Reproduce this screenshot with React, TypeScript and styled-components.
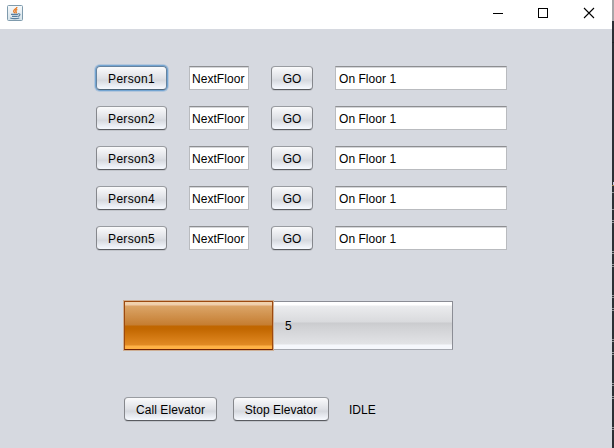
import React from "react";
import styled, { createGlobalStyle, css } from "styled-components";

const GlobalStyle = createGlobalStyle`
  * { box-sizing: border-box; }
  html, body { margin: 0; overflow: hidden; }
  body { font: 12px/15px "Liberation Sans", Arial, sans-serif; color: #000; }
`;

const Desktop = styled.div`
  display: grid;
  grid-template-columns: 612px 2px;
  width: 614px;
  height: 448px;
`;

const Frame = styled.main`
  display: flex;
  flex-direction: column;
  background: #d6d9e0;
`;

const TitleBar = styled.header`
  display: flex;
  justify-content: space-between;
  height: 29px;
  padding: 5px 17px 0 7px;
  background: #fff;
`;

const WindowControls = styled.div`
  display: flex;
  gap: 34px;
  padding-top: 2px;
`;

const Icon = styled.svg`
  display: block;
  flex: none;
`;

const Content = styled.section`
  display: flex;
  flex-direction: column;
  padding-top: 37px;
`;

const PersonList = styled.div`
  display: grid;
  gap: 16px;
  padding-left: 96px;
`;

const PersonRow = styled.div`
  display: grid;
  grid-template-columns: 71px 60px 42px 172px;
  column-gap: 22px;
  height: 24px;
`;

const Button = styled.button<{ $width: number; $focused?: boolean; $tracking?: number }>`
  width: ${({ $width }) => $width}px;
  height: 24px;
  padding: 2px 0 0;
  border: 1px solid #85878c;
  border-top-color: #999ca1;
  border-bottom-color: #595b60;
  border-radius: 4px;
  background: linear-gradient(#fbfbfc 0%, #f0f1f4 18%, #dfe1e6 50%, #d6d9df 60%, #e8ebf1 82%, #f7faff 100%);
  box-shadow: 0 1px 0 #c1c4ca;
  color: inherit;
  font: inherit;
  letter-spacing: ${({ $tracking = 0 }) => $tracking}px;
  white-space: nowrap;
  outline: none;
  ${({ $focused }) =>
    $focused &&
    css`
      border-color: #66839f;
      border-bottom-color: #4d6478;
      box-shadow: 0 0 0 1px #73a4d1, 0 0 0 2px #b4c7dc;
    `}
`;

const Field = styled.input<{ $width: number; $inset: number }>`
  width: ${({ $width }) => $width}px;
  height: 24px;
  padding: 1px 0 0 ${({ $inset }) => $inset}px;
  border: 1px solid #b9bbbf;
  border-top-color: #8d8e91;
  border-radius: 0;
  background: #fff;
  box-shadow: inset 0 1px 0 #d5d6d9;
  color: inherit;
  font: inherit;
  letter-spacing: 0.05px;
  outline: none;
`;

const ElevatorProgress = styled.div`
  display: flex;
  width: 329px;
  height: 49px;
  margin: 51px 0 0 124px;
  border: 1px solid #8b8d95;
  border-left: 0;
  border-bottom-color: #a4a7af;
  background: linear-gradient(#fff 0 3px, #ebecee 4px, #d9dadd 20px, #cacbce 21px, #cfd0d3 24px, #e2e3e6 42px, #f5f7fc 43px 47px);
`;

const ProgressFill = styled.div`
  width: 149px;
  height: 49px;
  margin-top: -1px;
  border: 1px solid #9d4a10;
  border-bottom-color: #6f2205;
  background: linear-gradient(#f0d2ad 0 2px, #efcaaa 3px, #dba568 4px, #c57d31 23px, #c06600 24px, #c26700 27px, #e28a24 43px, #ffb145 44px 47px);
  background-clip: padding-box;
  box-shadow: 0 0 0 1px #ceaf94;
`;

const ProgressValue = styled.span`
  padding: 17px 0 0 12px;
`;

const ElevatorActions = styled.div`
  display: flex;
  gap: 16px;
  margin: 47px 0 0 124px;
`;

const Status = styled.span`
  margin-left: 4px;
  padding-top: 6px;
`;

const Backdrop = styled.aside`
  background: linear-gradient(#a6a6a8 0 21px, #2c3035 21px);
`;

const people = [1, 2, 3, 4, 5];
const backdropMarks = [192, 209, 220, 222, 251, 253, 264, 266, 295, 297, 308, 310, 339, 341, 352, 354, 383, 385, 396, 398, 427, 429];

const JavaIcon = () => (
  <Icon width="16" height="16" viewBox="0 0 16 16">
    <defs>
      <linearGradient id="java-face" x2="0" y2="1">
        <stop stopColor="#f7fafc" />
        <stop offset="1" stopColor="#d5e2e9" />
      </linearGradient>
    </defs>
    <rect x=".5" y=".5" width="15" height="15" rx="1" fill="url(#java-face)" stroke="#7f9bad" />
    <path d="M10 2C9.8 3.8 6.3 4.6 6.7 6.4c.1.7.8 1.1 1.1 1.8M10.3 4.4C8.6 5.1 8.3 6 9 6.6c.6.6.3 1.2-.1 1.7" fill="none" stroke="#e87a23" strokeWidth="1.35" />
    <path d="M4 9.4h7M5 11.4h5.5M3.3 13.1c2.5.8 7.2.7 9-.2M11 8.8c2.9-.5 2.4 2.3-.2 2.6" fill="none" stroke="#587e9e" strokeWidth="1.1" />
  </Icon>
);

export default function App() {
  return (
    <>
      <GlobalStyle />
      <Desktop>
        <Frame>
          <TitleBar>
            <JavaIcon />
            <WindowControls>
              <Icon width="12" height="12" viewBox="0 0 12 12" shapeRendering="crispEdges">
                <path d="M2 6.5h10" stroke="#000" />
              </Icon>
              <Icon width="12" height="12" viewBox="0 0 12 12" shapeRendering="crispEdges">
                <rect x="1.5" y="1.5" width="9" height="9" fill="none" stroke="#000" />
              </Icon>
              <Icon width="12" height="12" viewBox="0 0 12 12">
                <path d="m1 1 10 10M11 1 1 11" stroke="#000" strokeWidth="1.1" />
              </Icon>
            </WindowControls>
          </TitleBar>
          <Content>
            <PersonList>
              {people.map((person) => (
                <PersonRow key={person}>
                  <Button $width={71} $focused={person === 1} $tracking={0.3}>Person{person}</Button>
                  <Field $width={60} $inset={2} defaultValue="NextFloor" />
                  <Button $width={42}>GO</Button>
                  <Field $width={172} $inset={3} defaultValue="On Floor 1" />
                </PersonRow>
              ))}
            </PersonList>
            <ElevatorProgress>
              <ProgressFill />
              <ProgressValue>5</ProgressValue>
            </ElevatorProgress>
            <ElevatorActions>
              <Button $width={93} $tracking={0.08}>Call Elevator</Button>
              <Button $width={96} $tracking={0.03}>Stop Elevator</Button>
              <Status>IDLE</Status>
            </ElevatorActions>
          </Content>
        </Frame>
        <Backdrop>
          <Icon width="2" height="448" viewBox="0 0 2 448" shapeRendering="crispEdges">
            <path d="M0 42.5h2" stroke="#202429" />
            <path d="M1 182h1v3h-1z" fill="#c8c7df" />
            <path d="M0 185.5h2" stroke="#a88855" />
            {backdropMarks.map((y) => (
              <path key={y} d={`M0 ${y + 0.5}h2`} stroke="#929497" />
            ))}
          </Icon>
        </Backdrop>
      </Desktop>
    </>
  );
}
